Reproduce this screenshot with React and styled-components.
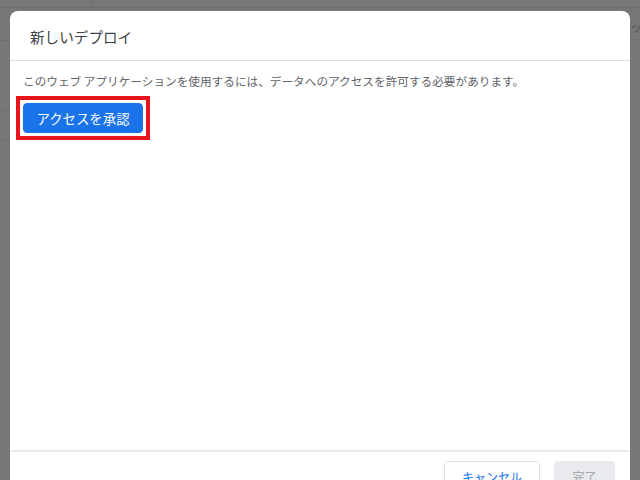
import React from 'react'
import styled, { createGlobalStyle } from 'styled-components'

const Global = createGlobalStyle`
  html, body {
    margin: 0;
    padding: 0;
    height: 100%;
    overflow: hidden;
  }
  body {
    font-family: Roboto, "Noto Sans CJK JP", "Noto Sans", sans-serif;
  }
`

const Backdrop = styled.div`
  position: relative;
  width: 640px;
  height: 480px;
  overflow: hidden;
  background-color: #767778;
  background-image:
    linear-gradient(#6e6f70, #6e6f70),
    linear-gradient(#6e6f70, #6e6f70),
    linear-gradient(#6e6f70, #6e6f70),
    linear-gradient(#6e6f70, #6e6f70),
    linear-gradient(#6e6f70, #6e6f70),
    linear-gradient(#6e6f70, #6e6f70);
  background-size: 640px 1px, 1px 8px, 12px 1px, 12px 1px, 12px 1px, 12px 1px;
  background-position: 0 7px, 91px 0, 0 40px, 0 110px, 0 140px, 628px 39px;
  background-repeat: no-repeat;
  padding: 11px 0 0 10px;
  box-sizing: border-box;
`

const BackText = styled.span`
  position: absolute;
  top: 18px;
  left: 630px;
  font-size: 12px;
  color: #555;
  font-family: "Noto Sans CJK JP", sans-serif;
  white-space: nowrap;
`

const Dialog = styled.div`
  width: 620px;
  height: 520px;
  background: #fff;
  border-radius: 8px 8px 0 0;
  display: flex;
  flex-direction: column;
  font-family: "Noto Sans CJK JP", sans-serif;
`

const Header = styled.div`
  height: 49px;
  padding: 0 20px;
  display: flex;
  align-items: center;
  border-bottom: 1px solid #dadce0;
  box-sizing: content-box;
`

const Title = styled.h2`
  margin: 2px 0 0;
  font-size: 14.6px;
  font-weight: 400;
  color: #3c4043;
`

const Body = styled.div`
  flex: 0 0 389px;
  padding: 12px 6px 0;
  box-sizing: border-box;
`

const Message = styled.p`
  margin: 0 0 0 7px;
  font-size: 11.65px;
  line-height: 16px;
  color: #5f6368;
  white-space: nowrap;
`

const Highlight = styled.div`
  display: inline-block;
  margin-top: 7px;
  padding: 3px;
  border: 4px solid #e8141c;
`

const Button = styled.button`
  height: 30px;
  padding: 0;
  border-radius: 4px;
  font-family: "Noto Sans CJK JP", sans-serif;
  font-size: ${p => (p.$large ? 13.4 : 12)}px;
  font-weight: 400;
  white-space: nowrap;
  cursor: pointer;
  box-sizing: border-box;
  background: ${p => p.$bg};
  color: ${p => p.$fg};
  border: 1px solid ${p => p.$border || p.$bg};
`

const Footer = styled.div`
  border-top: 2px solid #e8eaed;
  display: flex;
  justify-content: flex-end;
  gap: 14px;
  padding: 9px 15px 0 0;
`

export default function App() {
  return (
    <>
      <Global />
      <Backdrop>
        <BackText>ック</BackText>
        <Dialog>
          <Header>
            <Title>新しいデプロイ</Title>
          </Header>
          <Body>
            <Message>
              このウェブ アプリケーションを使用するには、データへのアクセスを許可する必要があります。
            </Message>
            <Highlight>
              <Button $large $bg="#1a73e8" $fg="#fff" style={{ width: 120 }}>
                アクセスを承認
              </Button>
            </Highlight>
          </Body>
          <Footer>
            <Button $bg="#fff" $fg="#1a73e8" $border="#dadce0" style={{ width: 96 }}>
              キャンセル
            </Button>
            <Button $bg="#e8eaed" $fg="#9aa0a6" style={{ width: 61 }}>
              完了
            </Button>
          </Footer>
        </Dialog>
      </Backdrop>
    </>
  )
}
